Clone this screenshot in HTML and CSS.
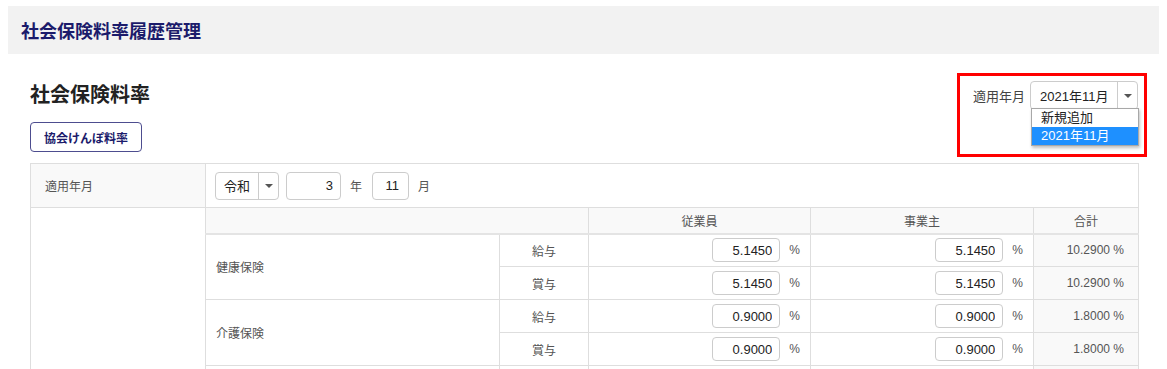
FILE: index.html
```html
<!DOCTYPE html>
<html lang="ja">
<head>
  <meta charset="UTF-8" />
  <meta name="viewport" content="width=device-width, initial-scale=1.0"/>
  <title>社会保険料率履歴管理</title>
  <link rel="stylesheet" href="styles.css">
</head>
<body>
  <div class="page">
    <div class="topbar">社会保険料率履歴管理</div>

    <div class="content">
      <div class="toolbar">
        <div class="toolbar-left">
          <h2>社会保険料率</h2>
          <button class="btn-outline">協会けんぽ料率</button>
        </div>

        <div class="year-picker">
          <span class="picker-label">適用年月</span>
          <div class="select-box picker-select">
            <span class="select-text">2021年11月</span>
            <span class="select-arrow"><i class="caret"></i></span>
          </div>
          <ul class="dropdown">
            <li>新規追加</li>
            <li class="selected">2021年11月</li>
          </ul>
          <div class="highlight"></div>
        </div>
      </div>

      <table class="rate-table">
        <colgroup>
          <col style="width:175px">
          <col style="width:294px">
          <col style="width:89px">
          <col style="width:222px">
          <col style="width:223px">
          <col style="width:105px">
        </colgroup>
        <tr class="row-date">
          <th class="label-cell">適用年月</th>
          <td colspan="5">
            <div class="date-inputs">
              <div class="select-box era-select">
                <span class="select-text">令和</span>
                <span class="select-arrow"><i class="caret"></i></span>
              </div>
              <input class="num-input year-input" type="text" value="3">
              <span class="unit">年</span>
              <input class="num-input month-input" type="text" value="11">
              <span class="unit">月</span>
            </div>
          </td>
        </tr>
        <tr class="row-head">
          <td class="blank-cell" rowspan="7"></td>
          <th colspan="2"></th>
          <th>従業員</th>
          <th>事業主</th>
          <th>合計</th>
        </tr>
        <tr>
          <td class="name-cell" rowspan="2">健康保険</td>
          <td class="kind-cell">給与</td>
          <td class="rate-cell"><input class="num-input rate-input" type="text" value="5.1450"><span class="pct">%</span></td>
          <td class="rate-cell"><input class="num-input rate-input" type="text" value="5.1450"><span class="pct">%</span></td>
          <td class="total-cell">10.2900 %</td>
        </tr>
        <tr>
          <td class="kind-cell">賞与</td>
          <td class="rate-cell"><input class="num-input rate-input" type="text" value="5.1450"><span class="pct">%</span></td>
          <td class="rate-cell"><input class="num-input rate-input" type="text" value="5.1450"><span class="pct">%</span></td>
          <td class="total-cell">10.2900 %</td>
        </tr>
        <tr>
          <td class="name-cell" rowspan="2">介護保険</td>
          <td class="kind-cell">給与</td>
          <td class="rate-cell"><input class="num-input rate-input" type="text" value="0.9000"><span class="pct">%</span></td>
          <td class="rate-cell"><input class="num-input rate-input" type="text" value="0.9000"><span class="pct">%</span></td>
          <td class="total-cell">1.8000 %</td>
        </tr>
        <tr>
          <td class="kind-cell">賞与</td>
          <td class="rate-cell"><input class="num-input rate-input" type="text" value="0.9000"><span class="pct">%</span></td>
          <td class="rate-cell"><input class="num-input rate-input" type="text" value="0.9000"><span class="pct">%</span></td>
          <td class="total-cell">1.8000 %</td>
        </tr>
        <tr>
          <td class="name-cell" rowspan="2">厚生年金保険</td>
          <td class="kind-cell">給与</td>
          <td class="rate-cell"><input class="num-input rate-input" type="text" value="9.1500"><span class="pct">%</span></td>
          <td class="rate-cell"><input class="num-input rate-input" type="text" value="9.1500"><span class="pct">%</span></td>
          <td class="total-cell">18.3000 %</td>
        </tr>
        <tr>
          <td class="kind-cell">賞与</td>
          <td class="rate-cell"><input class="num-input rate-input" type="text" value="9.1500"><span class="pct">%</span></td>
          <td class="rate-cell"><input class="num-input rate-input" type="text" value="9.1500"><span class="pct">%</span></td>
          <td class="total-cell">18.3000 %</td>
        </tr>
      </table>
    </div>
  </div>
</body>
</html>
```

FILE: styles.css
```css
body {
  margin: 0;
  font-family: 'Liberation Sans', 'Noto Sans CJK JP', sans-serif;
  color: #333;
  background: white;
}

.page {
  padding: 6px 8px 0;
}

.topbar {
  height: 48px;
  line-height: 48px;
  padding-left: 13px;
  background: #f2f2f2;
  color: #1b1b6b;
  font-size: 18px;
  font-weight: bold;
  font-family: 'Noto Sans CJK JP', sans-serif;
}

.content {
  padding: 0 21px 0 22px;
}

.toolbar {
  display: flex;
  justify-content: space-between;
  align-items: flex-start;
  margin-top: 27px;
}

.toolbar-left h2 {
  margin: 0;
  font-size: 20px;
  line-height: 26px;
  color: #222;
  font-family: 'Noto Sans CJK JP', sans-serif;
}

.btn-outline {
  display: block;
  margin-top: 15px;
  height: 30px;
  width: 112px;
  padding: 0;
  background: white;
  border: 1px solid #4d4d8f;
  border-radius: 4px;
  color: #1b1b6b;
  font-size: 12px;
  font-weight: bold;
  font-family: 'Noto Sans CJK JP', sans-serif;
  cursor: pointer;
}

/* year picker with open dropdown */
.year-picker {
  position: relative;
  display: flex;
  align-items: center;
  gap: 5px;
}

.picker-label {
  font-size: 13px;
  color: #444;
}

.select-box {
  display: flex;
  align-items: stretch;
  box-sizing: border-box;
  border: 1px solid #ccc;
  border-radius: 4px;
  background: white;
  font-size: 13px;
  color: #222;
}

.select-text {
  flex: 1;
  display: flex;
  align-items: center;
}

.select-arrow {
  width: 19px;
  border-left: 1px solid #ccc;
  display: flex;
  align-items: center;
  justify-content: center;
}

.caret {
  width: 0;
  height: 0;
  border-left: 4px solid transparent;
  border-right: 4px solid transparent;
  border-top: 4px solid #555;
}

.picker-select {
  width: 108px;
  height: 29px;
}

.picker-select .select-text {
  padding-left: 9px;
}

.dropdown {
  position: absolute;
  top: 27px;
  right: -1px;
  width: 108px;
  margin: 0;
  padding: 0;
  list-style: none;
  box-sizing: border-box;
  background: white;
  border: 1px solid #a8a8a8;
  box-shadow: 1px 2px 3px rgba(0, 0, 0, 0.25);
  font-size: 13px;
  color: #222;
}

.dropdown li {
  height: 18px;
  line-height: 18px;
  padding-left: 9px;
}

.dropdown li.selected {
  background: #1e90ff;
  color: white;
}

.highlight {
  position: absolute;
  top: -8px;
  right: -9px;
  width: 190px;
  height: 84px;
  box-sizing: border-box;
  border: 3px solid #f00;
  pointer-events: none;
}

/* table */
.rate-table {
  margin-top: 11px;
  width: 1108px;
  table-layout: fixed;
  border-collapse: collapse;
  font-size: 12px;
  color: #555;
}

.rate-table th,
.rate-table td {
  border: 1px solid #dedede;
  padding: 0;
  font-weight: normal;
}

.label-cell {
  background: #f9f9f9;
  text-align: left;
  padding-left: 14px !important;
}

.date-inputs {
  display: flex;
  align-items: center;
  padding-left: 9px;
  font-size: 13px;
  color: #222;
}

.era-select {
  width: 64px;
  height: 28px;
}

.era-select .select-text {
  justify-content: center;
}

.num-input {
  box-sizing: border-box;
  border: 1px solid #ccc;
  border-radius: 4px;
  text-align: right;
  font-family: inherit;
  font-size: 13px;
  color: #222;
  padding: 0 7px;
  background: white;
}

.year-input {
  width: 55px;
  height: 28px;
  margin-left: 7px;
}

.month-input {
  width: 37px;
  height: 28px;
  padding-right: 9px;
}

.unit {
  color: #555;
  font-size: 12px;
  margin: 0 10px 0 9px;
}

.row-head th {
  background: #f9f9f9;
  border-bottom: 2px solid #e4e4e4;
  text-align: center;
}

.row-head .blank-cell {
  background: white;
}

.rate-table tr {
  height: 33px;
}

.rate-table tr.row-date {
  height: 44px;
}

.rate-table tr.row-head {
  height: 26px;
}

.name-cell {
  padding-left: 10px !important;
}

.kind-cell {
  text-align: center;
}

.rate-cell {
  text-align: right;
  padding-right: 10px !important;
}

.rate-input {
  width: 68px;
  height: 24px;
  vertical-align: middle;
}

.pct {
  display: inline-block;
  margin-left: 9px;
  vertical-align: middle;
}

.total-cell {
  background: #f9f9f9;
  text-align: right;
  padding-right: 14px !important;
}
```
